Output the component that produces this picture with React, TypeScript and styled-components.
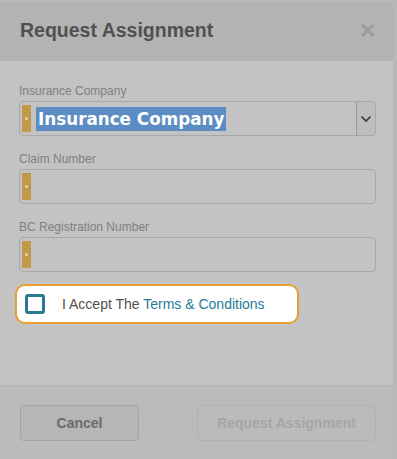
import React from 'react';
import styled, { createGlobalStyle } from 'styled-components';

const GlobalStyle = createGlobalStyle`
  html, body {
    margin: 0;
    padding: 0;
    background: #b8b8b8;
  }
  body {
    font-family: 'Liberation Sans', Arial, sans-serif;
  }
`;

const Page = styled.div`
  width: 397px;
  height: 459px;
  display: flex;
  overflow: hidden;
`;

const Modal = styled.div`
  width: 393px;
  height: 459px;
  display: flex;
  flex-direction: column;
  background: #c3c3c3;
  border-top: 2px solid #b8b8b8;
  box-sizing: border-box;
`;

const Header = styled.div`
  height: 59px;
  flex: none;
  display: flex;
  align-items: center;
  justify-content: space-between;
  padding: 0 16px 0 20px;
  background: #b3b3b3;
  box-sizing: border-box;
`;

const Title = styled.h2`
  margin: 0;
  font-size: 19.5px;
  font-weight: bold;
  color: #505050;
  padding-bottom: 3px;
`;

const Close = styled.span`
  font-size: 21px;
  font-weight: bold;
  color: #9c9c9c;
  line-height: 1;
  padding-bottom: 3px;
`;

const Body = styled.div`
  flex: 1;
  display: flex;
  flex-direction: column;
  padding: 23px 17px 0 15px;
`;

const Field = styled.div`
  display: flex;
  flex-direction: column;
  padding-left: 4px;
  margin-bottom: 16px;
`;

const Label = styled.label`
  font-size: 12px;
  color: #7f7f7f;
  margin-bottom: 2px;
  line-height: 15px;
`;

const Input = styled.div`
  height: 35px;
  box-sizing: border-box;
  border: 1px solid #a8a8a8;
  border-radius: 4px;
  display: flex;
  align-items: center;
  padding-left: 2px;
`;

const Grip = styled.span`
  width: 9px;
  height: 27px;
  background: #c09a4a;
  display: flex;
  align-items: center;
  justify-content: center;
  flex: none;

  &::after {
    content: '';
    width: 3px;
    height: 3px;
    border-radius: 50%;
    background: #e2d3b3;
  }
`;

const Selected = styled.span`
  margin-left: 5px;
  background: #5b8cc3;
  color: #ffffff;
  font-family: 'DejaVu Sans', Verdana, sans-serif;
  font-weight: bold;
  font-size: 16.8px;
  line-height: 24px;
  padding: 0 2px;
`;

const SelectButton = styled.span`
  margin-left: auto;
  align-self: stretch;
  width: 18px;
  border-left: 1px solid #9a9a9a;
  border-radius: 0 3px 3px 0;
  background: #bdbdbd;
  display: flex;
  align-items: center;
  justify-content: center;
`;

const AcceptRow = styled.div`
  margin-top: -4px;
  width: 284px;
  height: 40px;
  box-sizing: border-box;
  background: #ffffff;
  border: 2px solid #e8a032;
  border-radius: 10px;
  display: flex;
  align-items: center;
  padding-left: 8px;
  gap: 17px;
`;

const Box = styled.span`
  width: 20px;
  height: 20px;
  box-sizing: border-box;
  border: 3px solid #2b7894;
  border-radius: 3px;
  flex: none;
`;

const AcceptText = styled.span`
  font-size: 14px;
  color: #505050;
`;

const TermsLink = styled.a`
  color: #1f7a98;
  text-decoration: none;
`;

const Footer = styled.div`
  height: 74px;
  flex: none;
  display: flex;
  align-items: center;
  justify-content: space-between;
  padding: 0 17px 0 20px;
  background: #bbbbbb;
  border-top: 1px solid #b6b6b6;
  box-sizing: border-box;
`;

const Button = styled.button<{ $primary?: boolean }>`
  height: 36px;
  width: ${({ $primary }) => ($primary ? '179px' : '119px')};
  box-sizing: border-box;
  border-radius: 4px;
  font-size: 14px;
  font-weight: bold;
  font-family: 'Liberation Sans', Arial, sans-serif;
  border: 1px solid ${({ $primary }) => ($primary ? '#a9b7b9' : '#a3a3a3')};
  background: ${({ $primary }) => ($primary ? '#bbbbbb' : '#b6b6b6')};
  color: ${({ $primary }) => ($primary ? '#a6a6a6' : '#6a6a6a')};
  margin-top: 1px;
`;

export default function App() {
  return (
    <>
      <GlobalStyle />
      <Page>
        <Modal>
          <Header>
            <Title>Request Assignment</Title>
            <Close>✕</Close>
          </Header>
          <Body>
            <Field>
              <Label>Insurance Company</Label>
              <Input>
                <Grip />
                <Selected>Insurance Company</Selected>
                <SelectButton>
                  <svg width="12" height="8" viewBox="0 0 12 8">
                    <path d="M1.5 1.5 L6 6 L10.5 1.5" fill="none" stroke="#3a3a3a" strokeWidth="1.6" />
                  </svg>
                </SelectButton>
              </Input>
            </Field>
            <Field>
              <Label>Claim Number</Label>
              <Input>
                <Grip />
              </Input>
            </Field>
            <Field>
              <Label>BC Registration Number</Label>
              <Input>
                <Grip />
              </Input>
            </Field>
            <AcceptRow>
              <Box />
              <AcceptText>
                I Accept The <TermsLink>Terms &amp; Conditions</TermsLink>
              </AcceptText>
            </AcceptRow>
          </Body>
          <Footer>
            <Button>Cancel</Button>
            <Button $primary>Request Assignment</Button>
          </Footer>
        </Modal>
      </Page>
    </>
  );
}
